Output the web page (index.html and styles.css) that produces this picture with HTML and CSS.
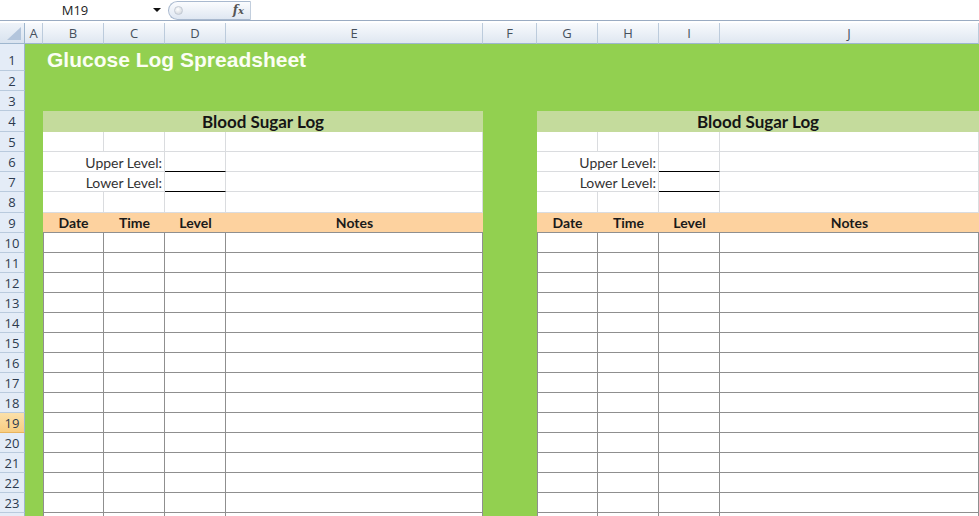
FILE: index.html
```html
<!DOCTYPE html>
<html lang="en">
<head>
<meta charset="UTF-8">
<title>Glucose Log Spreadsheet</title>
<link rel="stylesheet" href="styles.css">
</head>
<body>

<!-- name box + formula bar -->
<div class="formula-bar">
    <div class="name-box">M19</div>
    <div class="name-arrow"></div>
    <div class="fx-pill">
        <span class="fx-knob"></span>
        <span class="fx">f<span class="fx-x">x</span></span>
    </div>
    <div class="formula-input"></div>
</div>

<div class="sheet">

    <!-- column headers -->
    <div class="corner"></div>
    <div class="col-h">A</div>
    <div class="col-h">B</div>
    <div class="col-h">C</div>
    <div class="col-h">D</div>
    <div class="col-h">E</div>
    <div class="col-h">F</div>
    <div class="col-h">G</div>
    <div class="col-h">H</div>
    <div class="col-h">I</div>
    <div class="col-h">J</div>

    <!-- 1-3 -->
    <div class="rh rh-tall">1</div>
    <div class="title">Glucose Log Spreadsheet</div>
    <div class="rh">2</div>
    <div class="g wide"></div>
    <div class="rh">3</div>
    <div class="g wide"></div>

    <!-- 4 -->
    <div class="rh">4</div>
    <div class="g"></div>
    <div class="band">Blood Sugar Log</div>
    <div class="g"></div>
    <div class="band">Blood Sugar Log</div>

    <!-- 5 -->
    <div class="rh">5</div>
    <div class="g"></div>
    <div class="w"></div><div class="w"></div><div class="w"></div><div class="w"></div>
    <div class="g"></div>
    <div class="w"></div><div class="w"></div><div class="w"></div><div class="w"></div>

    <!-- 6 -->
    <div class="rh">6</div>
    <div class="g"></div>
    <div class="w lbl">Upper Level:</div><div class="w ul"></div><div class="w"></div>
    <div class="g"></div>
    <div class="w lbl">Upper Level:</div><div class="w ul"></div><div class="w"></div>

    <!-- 7 -->
    <div class="rh">7</div>
    <div class="g"></div>
    <div class="w lbl">Lower Level:</div><div class="w ul"></div><div class="w"></div>
    <div class="g"></div>
    <div class="w lbl">Lower Level:</div><div class="w ul"></div><div class="w"></div>

    <!-- 8 -->
    <div class="rh">8</div>
    <div class="g"></div>
    <div class="w"></div><div class="w"></div><div class="w"></div><div class="w"></div>
    <div class="g"></div>
    <div class="w"></div><div class="w"></div><div class="w"></div><div class="w"></div>

    <!-- 9 -->
    <div class="rh">9</div>
    <div class="g"></div>
    <div class="hd">Date</div><div class="hd">Time</div><div class="hd">Level</div><div class="hd">Notes</div>
    <div class="g"></div>
    <div class="hd">Date</div><div class="hd">Time</div><div class="hd">Level</div><div class="hd">Notes</div>

    <!-- log rows -->
    <div class="rh">10</div><div class="g"></div><div class="t tl"></div><div class="t"></div><div class="t"></div><div class="t"></div><div class="g"></div><div class="t tl"></div><div class="t"></div><div class="t"></div><div class="t"></div>
    <div class="rh">11</div><div class="g"></div><div class="t tl"></div><div class="t"></div><div class="t"></div><div class="t"></div><div class="g"></div><div class="t tl"></div><div class="t"></div><div class="t"></div><div class="t"></div>
    <div class="rh">12</div><div class="g"></div><div class="t tl"></div><div class="t"></div><div class="t"></div><div class="t"></div><div class="g"></div><div class="t tl"></div><div class="t"></div><div class="t"></div><div class="t"></div>
    <div class="rh">13</div><div class="g"></div><div class="t tl"></div><div class="t"></div><div class="t"></div><div class="t"></div><div class="g"></div><div class="t tl"></div><div class="t"></div><div class="t"></div><div class="t"></div>
    <div class="rh">14</div><div class="g"></div><div class="t tl"></div><div class="t"></div><div class="t"></div><div class="t"></div><div class="g"></div><div class="t tl"></div><div class="t"></div><div class="t"></div><div class="t"></div>
    <div class="rh">15</div><div class="g"></div><div class="t tl"></div><div class="t"></div><div class="t"></div><div class="t"></div><div class="g"></div><div class="t tl"></div><div class="t"></div><div class="t"></div><div class="t"></div>
    <div class="rh">16</div><div class="g"></div><div class="t tl"></div><div class="t"></div><div class="t"></div><div class="t"></div><div class="g"></div><div class="t tl"></div><div class="t"></div><div class="t"></div><div class="t"></div>
    <div class="rh">17</div><div class="g"></div><div class="t tl"></div><div class="t"></div><div class="t"></div><div class="t"></div><div class="g"></div><div class="t tl"></div><div class="t"></div><div class="t"></div><div class="t"></div>
    <div class="rh">18</div><div class="g"></div><div class="t tl"></div><div class="t"></div><div class="t"></div><div class="t"></div><div class="g"></div><div class="t tl"></div><div class="t"></div><div class="t"></div><div class="t"></div>
    <div class="rh sel">19</div><div class="g"></div><div class="t tl"></div><div class="t"></div><div class="t"></div><div class="t"></div><div class="g"></div><div class="t tl"></div><div class="t"></div><div class="t"></div><div class="t"></div>
    <div class="rh">20</div><div class="g"></div><div class="t tl"></div><div class="t"></div><div class="t"></div><div class="t"></div><div class="g"></div><div class="t tl"></div><div class="t"></div><div class="t"></div><div class="t"></div>
    <div class="rh">21</div><div class="g"></div><div class="t tl"></div><div class="t"></div><div class="t"></div><div class="t"></div><div class="g"></div><div class="t tl"></div><div class="t"></div><div class="t"></div><div class="t"></div>
    <div class="rh">22</div><div class="g"></div><div class="t tl"></div><div class="t"></div><div class="t"></div><div class="t"></div><div class="g"></div><div class="t tl"></div><div class="t"></div><div class="t"></div><div class="t"></div>
    <div class="rh">23</div><div class="g"></div><div class="t tl"></div><div class="t"></div><div class="t"></div><div class="t"></div><div class="g"></div><div class="t tl"></div><div class="t"></div><div class="t"></div><div class="t"></div>
    <div class="rh"></div><div class="g"></div><div class="t tl"></div><div class="t"></div><div class="t"></div><div class="t"></div><div class="g"></div><div class="t tl"></div><div class="t"></div><div class="t"></div><div class="t"></div>

</div>

</body>
</html>
```

FILE: styles.css
```css
:root{
    --green:#92d050;
    --band:#c4db9c;
    --orange:#fdd29f;
    --hdr-line:#9eb6ce;
    --grid:#dadcdf;
    --table:#8f8f8f;
}

*{
    box-sizing:border-box;
}

body{
    margin:0;
    background:#fff;
    overflow:hidden;
    font-family:"Open Sans", sans-serif;
}

/* formula bar */
.formula-bar{
    display:flex;
    align-items:center;
    height:21px;
    border-bottom:1px solid #9aabc2;
}

.name-box{
    width:150px;
    text-align:center;
    font-size:13px;
    color:#222;
}

.name-arrow{
    width:18px;
    display:flex;
    justify-content:center;
}

.name-arrow::after{
    content:"";
    border-left:4px solid transparent;
    border-right:4px solid transparent;
    border-top:4px solid #111;
    margin-left:-4px;
}

.fx-pill{
    width:83px;
    height:19px;
    display:flex;
    align-items:center;
    justify-content:space-between;
    padding:0 6px 0 5px;
    border:1px solid #a9b9cf;
    border-right-color:#c2cedd;
    border-radius:10px 0 0 10px;
    background:linear-gradient(#fbfcfe,#dfe7f2);
}

.fx-knob{
    width:9px;
    height:9px;
    border-radius:50%;
    background:radial-gradient(circle at 40% 35%,#fff,#c9cfd7);
    border:1px solid #c3cad4;
}

.fx{
    font-family:"DejaVu Serif", serif;
    font-style:italic;
    font-weight:bold;
    font-size:12px;
    color:#555;
}

.fx-x{
    font-size:10px;
}

.formula-input{
    flex:1;
}

/* sheet grid: header, row 1, rows 2-3, row 4, rows 5-7, row 8, then 20px rows */
.sheet{
    margin-top:2px;
    display:grid;
    grid-template-columns:25px 18px 61px 61px 61px 257px 54px 61px 61px 61px 259px;
    grid-template-rows:21px 27px 20px 20px 21px 20px 20px 20px 21px;
    grid-auto-rows:20px;
}

.corner{
    display:flex;
    justify-content:flex-end;
    align-items:flex-end;
    padding:3px 3px 3px 0;
    background:linear-gradient(#eef3f9,#d9e3ef);
    border-right:1px solid var(--hdr-line);
    border-bottom:1px solid var(--hdr-line);
}

.corner::after{
    content:"";
    width:14px;
    height:13px;
    background:#b3c5dc;
    clip-path:polygon(100% 0,100% 100%,0 100%);
}

.col-h{
    display:flex;
    align-items:center;
    justify-content:center;
    background:linear-gradient(#f8fafd,#dfe7f1);
    border-right:1px solid #bccbdc;
    border-bottom:1px solid var(--hdr-line);
    font-size:13px;
    color:#46505c;
}

.rh{
    display:flex;
    align-items:center;
    justify-content:center;
    background:#e4ecf7;
    border-right:1px solid var(--hdr-line);
    border-bottom:1px solid #b9cadd;
    font-size:13px;
    color:#2c3a4e;
}

.rh-tall{
    align-items:flex-end;
    padding-bottom:1px;
}

.rh.sel{
    background:linear-gradient(#fbe0a9,#f8cd82);
    border-bottom-color:#e8b35c;
}

/* fills */
.g{
    background:var(--green);
}

.wide{
    grid-column:span 10;
}

.title{
    grid-column:span 10;
    display:flex;
    align-items:flex-end;
    padding:0 0 0 22px;
    background:var(--green);
    color:#fbfef4;
    font-family:"Liberation Sans", sans-serif;
    font-weight:bold;
    font-size:21px;
    line-height:22px;
}

.band{
    grid-column:span 4;
    background:var(--band);
    text-align:center;
    font-family:Lato, sans-serif;
    font-weight:bold;
    font-size:17px;
    line-height:21px;
    color:#151515;
}

/* plain cells */
.w{
    border-right:1px solid var(--grid);
    border-bottom:1px solid var(--grid);
}

.lbl{
    grid-column:span 2;
    text-align:right;
    padding:1px 2px 0 0;
    font-family:Lato, sans-serif;
    font-size:14px;
    line-height:20px;
    color:#333;
}

.w.ul{
    border-bottom:1px solid #000;
}

/* log table */
.hd{
    background:var(--orange);
    border-bottom:1px solid var(--table);
    text-align:center;
    font-family:Lato, sans-serif;
    font-weight:bold;
    font-size:14px;
    line-height:20px;
    color:#1a1a1a;
}

.t{
    border-right:1px solid var(--table);
    border-bottom:1px solid var(--table);
}

.tl{
    border-left:1px solid var(--table);
}
```
